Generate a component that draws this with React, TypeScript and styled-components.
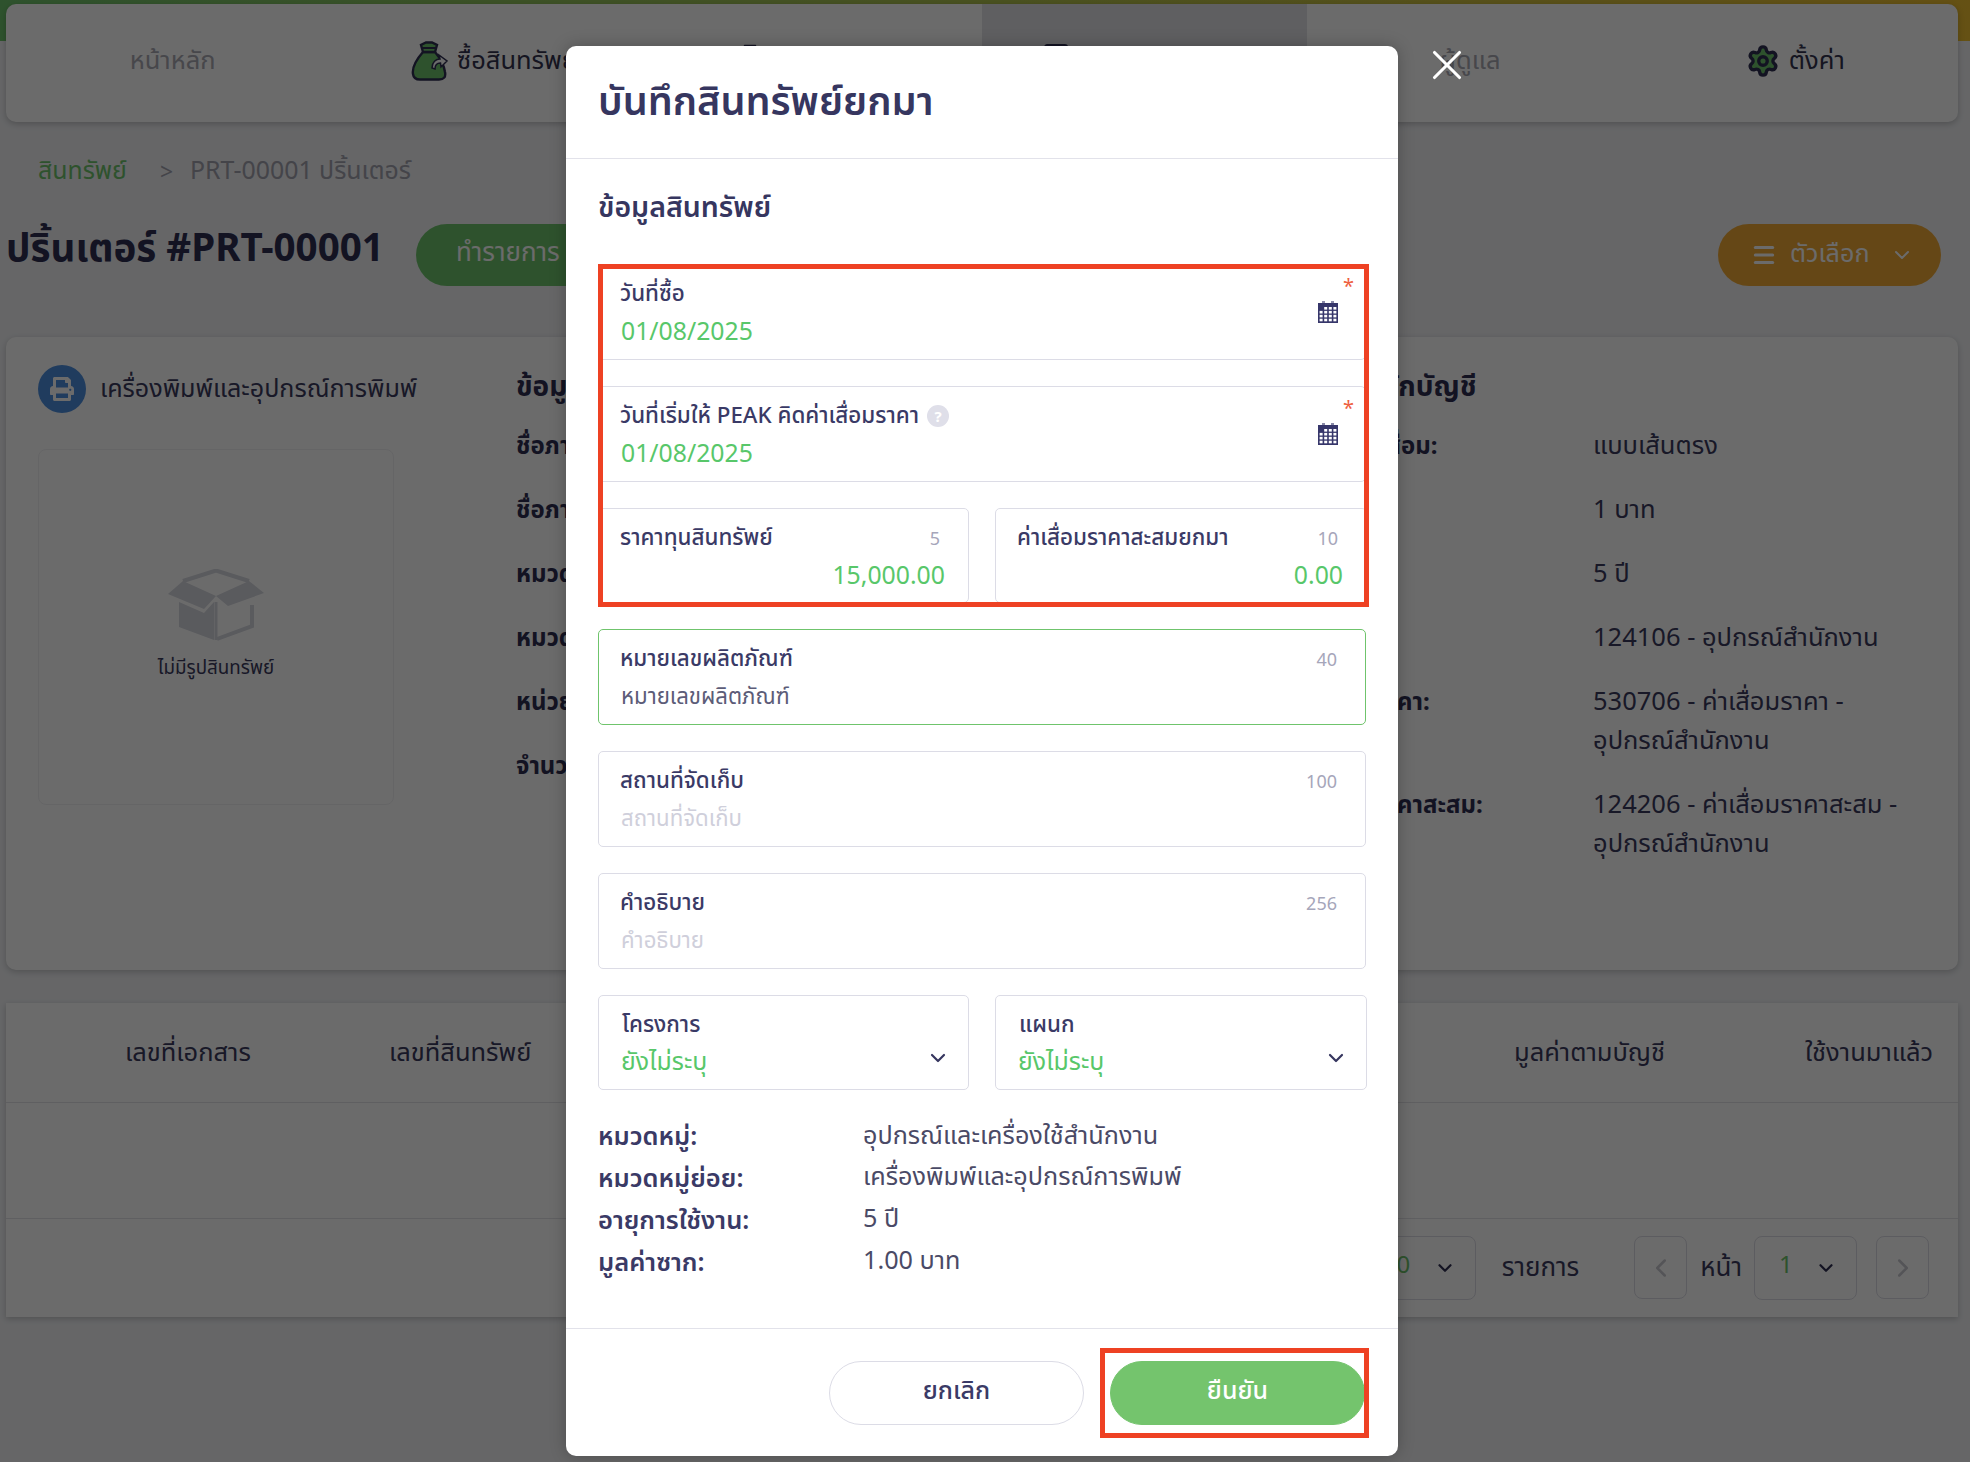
import React from "react";
import styled, { createGlobalStyle } from "styled-components";
import { ChevronDown, ChevronLeft, ChevronRight, Menu, Settings, X } from "lucide-react";
import { FaPrint } from "react-icons/fa";

const Global = createGlobalStyle`
  html, body { margin: 0; padding: 0; height: 100%; overflow: hidden; }
  body { font-family: "Noto Sans", "Noto Sans Thai", "Open Sans", "Liberation Sans", sans-serif; color: #3a3a66; }
  * { box-sizing: border-box; }
`;

const Page = styled.div`
  position: relative;
  width: 1970px;
  height: 1462px;
  overflow: hidden;
  padding: 4px 12px 0 6px;
  background: linear-gradient(90deg, #6fc46c, #f0c030) top / 100% 41px no-repeat, #f2f3f6;
`;

const Nav = styled.nav`
  display: grid;
  grid-template-columns: repeat(6, 1fr);
  height: 118px;
  background: #fff;
  border-radius: 10px;
  box-shadow: 0 2px 6px rgba(0, 0, 0, 0.22);
  overflow: hidden;
`;

const Tab = styled.div<{ $active?: boolean; $faint?: boolean }>`
  display: flex;
  justify-content: center;
  align-items: center;
  gap: 9px;
  padding-bottom: 5px;
  font-size: 25.500px;
  color: ${(p) => (p.$faint ? "#a9a9b4" : "#34344f")};
  background: ${(p) => (p.$active ? "#e2e3e8" : "transparent")};

  &:first-child {
    padding-left: 8px;
  }
`;

const Crumbs = styled.div`
  display: flex;
  align-items: center;
  height: 36px;
  margin-top: 31px;
  padding-left: 32px;
  font-size: 24.900px;
  color: #a2a2ae;
`;

const CrumbLink = styled.span`
  color: #6fc46c;
`;

const CrumbSep = styled.span`
  margin: 0 17px 0 33px;
  font-size: 23px;
`;

const TitleRow = styled.div`
  display: flex;
  align-items: center;
  height: 62px;
  margin-top: 35px;
  padding: 0 17px 0 0;
`;

const PageTitle = styled.h1`
  margin: 0 0 13px;
  font-size: 38.600px;
  font-weight: 700;
  color: #2e2e52;
`;

const GreenPill = styled.div`
  display: flex;
  align-items: center;
  width: 300px;
  height: 62px;
  margin-left: 32px;
  padding: 0 0 4px 40px;
  border-radius: 31px;
  background: #6fc46c;
  color: #fff;
  font-size: 26px;
`;

const AmberPill = styled.div`
  display: flex;
  align-items: center;
  gap: 13px;
  width: 223px;
  height: 62px;
  margin-left: auto;
  padding: 0 0 0 33px;
  border-radius: 31px;
  background: #f0a935;
  color: #fff;
  font-size: 25.200px;
`;

const PillLabel = styled.span`
  padding-bottom: 2px;
`;

const PillChevron = styled.span`
  display: flex;
  margin-left: 7px;
`;

const InfoCard = styled.section`
  display: grid;
  grid-template-columns: 478px 780px 1fr;
  height: 633px;
  margin-top: 51px;
  padding: 28px 0 0 32px;
  background: #fff;
  border-radius: 10px;
  box-shadow: 0 2px 6px rgba(0, 0, 0, 0.2);
`;

const CategoryRow = styled.div`
  display: flex;
  align-items: center;
  gap: 14px;
  font-size: 25.100px;
  color: #3a3a5e;
`;

const CategoryIcon = styled.span`
  display: flex;
  align-items: center;
  justify-content: center;
  width: 48px;
  height: 48px;
  border-radius: 50%;
  background: #4d8fe0;
  color: #fff;
`;

const ImageBox = styled.div`
  display: flex;
  flex-direction: column;
  align-items: center;
  justify-content: center;
  gap: 13px;
  width: 356px;
  height: 356px;
  margin-top: 36px;
  padding-bottom: 3px;
  border: 1px solid #f1f1f4;
  border-radius: 8px;
  font-size: 18.800px;
  color: #3a3a5e;
`;

const InfoCol = styled.div`
  display: flex;
  flex-direction: column;
  gap: 25px;
`;

const InfoHeading = styled.h3`
  margin: 0 0 -5px;
  font-size: 28px;
  line-height: 40px;
  font-weight: 700;
  color: #2e2e52;
`;

const InfoRow = styled.div`
  display: grid;
  grid-template-columns: 297px 330px;
  font-size: 25.500px;
  line-height: 39px;
  color: #3a3a5e;
`;

const InfoLabel = styled.span`
  font-size: 24px;
  font-weight: 700;
  color: #2e2e52;
`;

const TableCard = styled.section`
  height: 314px;
  margin-top: 33px;
  background: #fff;
  box-shadow: 0 2px 6px rgba(0, 0, 0, 0.2);
`;

const TableHead = styled.div`
  display: grid;
  grid-template-columns: 119px 264px 1125px 291px 1fr;
  align-items: center;
  height: 100px;
  border-bottom: 1px solid #e2e2e8;
  font-size: 25.500px;
  color: #3a3a5e;
`;

const TableBody = styled.div`
  height: 116px;
  border-bottom: 1px solid #e2e2e8;
`;

const Pager = styled.div`
  display: flex;
  align-items: center;
  justify-content: flex-end;
  height: 97px;
  padding-right: 29px;
  font-size: 26px;
  color: #3a3a5e;
`;

const PagerSelect = styled.div<{ $w: number; $mr: number; $pl: number }>`
  display: flex;
  align-items: center;
  justify-content: space-between;
  width: ${(p) => p.$w}px;
  height: 64px;
  margin-right: ${(p) => p.$mr}px;
  padding: 0 19px 0 ${(p) => p.$pl}px;
  border: 1px solid #dcdce4;
  border-radius: 8px;
`;

const PagerValue = styled.span`
  font-size: 24px;
  color: #6fc46c;
  padding-bottom: 8px;
`;

const PagerButton = styled.div<{ $mr?: number }>`
  display: flex;
  align-items: center;
  justify-content: center;
  width: 53px;
  height: 63px;
  margin-right: ${(p) => p.$mr ?? 0}px;
  border: 1px solid #dcdce4;
  border-radius: 8px;
  color: #c8c8d0;
`;

const PagerText = styled.span<{ $mr: number }>`
  margin-right: ${(p) => p.$mr}px;
`;

const Backdrop = styled.div`
  position: absolute;
  inset: 0;
  background: rgba(0, 0, 0, 0.58);
`;

const Modal = styled.div`
  position: absolute;
  left: 566px;
  top: 46px;
  width: 832px;
  height: 1410px;
  display: flex;
  flex-direction: column;
  background: #fff;
  border-radius: 10px;
  box-shadow: 0 0 16px rgba(0, 0, 0, 0.25);
`;

const CloseButton = styled.div`
  position: absolute;
  left: 1422px;
  top: 40px;
  display: flex;
  color: #fff;
`;

const ModalHeader = styled.header`
  display: flex;
  align-items: center;
  height: 113px;
  padding: 1px 32px 0;
  border-bottom: 1px solid #e2e2ea;
`;

const ModalTitle = styled.h2`
  margin: 0;
  font-size: 39.600px;
  font-weight: 600;
  color: #36365f;
`;

const ModalBody = styled.div`
  flex: 1;
  padding: 0 32px;
`;

const SectionTitle = styled.h3`
  display: flex;
  align-items: center;
  height: 105px;
  margin: 0;
  padding-bottom: 6px;
  font-size: 28.500px;
  font-weight: 600;
  color: #36365f;
`;

const Fields = styled.div`
  display: flex;
  flex-direction: column;
  gap: 26px;
`;

const Pair = styled.div`
  display: grid;
  grid-template-columns: 371px 372px;
  gap: 26px;
`;

const Field = styled.div<{ $focus?: boolean }>`
  position: relative;
  height: 95.750px;
  padding: 12px 22px 0 21px;
  border: 1px solid ${(p) => (p.$focus ? "#6fc46c" : "#dcdce6")};
  border-radius: 5px;
  background: #fff;
`;

const LabelLine = styled.div<{ $inset?: boolean }>`
  display: flex;
  align-items: center;
  justify-content: space-between;
  height: 34px;
  padding-left: ${(p) => (p.$inset ? 2 : 0)}px;
`;

const Label = styled.label`
  display: flex;
  align-items: center;
  gap: 8px;
  font-size: 22.400px;
  font-weight: 500;
  color: #3a3a66;
`;

const Counter = styled.span`
  padding-right: 6px;
  font-size: 18px;
  color: #a6a6ba;
`;

const Value = styled.div<{ $right?: boolean; $tone?: "green" | "dark" | "muted" | "choice" }>`
  height: 40px;
  margin-top: ${(p) => (p.$tone === "choice" ? -2 : p.$tone === "dark" || p.$tone === "muted" ? 0 : -1)}px;
  padding-left: 1px;
  padding-right: ${(p) => (p.$right ? 1 : 0)}px;
  line-height: 40px;
  font-size: ${(p) => (p.$tone === "dark" || p.$tone === "muted" ? 22.2 : 24.8)}px;
  text-align: ${(p) => (p.$right ? "right" : "left")};
  color: ${(p) =>
    p.$tone === "dark" ? "#5c5c78" : p.$tone === "muted" ? "#cfcfdb" : "#58c76a"};
`;

const Required = styled.span`
  position: absolute;
  top: 11px;
  right: 11px;
  font-size: 20px;
  line-height: 20px;
  color: #ee6040;
`;

const CalendarSlot = styled.span`
  position: absolute;
  top: 36px;
  right: 27px;
  display: flex;
`;

const HelpDot = styled.span`
  display: inline-flex;
  align-items: center;
  justify-content: center;
  width: 22px;
  height: 22px;
  border-radius: 50%;
  background: #dfdfe9;
  color: #fff;
  font-size: 15px;
  font-weight: 700;
`;

const SelectChevron = styled.span`
  position: absolute;
  top: 50px;
  right: 18px;
  display: flex;
  color: #36365f;
`;

const Summary = styled.dl`
  display: grid;
  grid-template-columns: 265px 1fr;
  grid-auto-rows: 41.800px;
  align-items: center;
  margin: 26px 0 0;
`;

const SummaryLabel = styled.dt`
  font-size: 25.500px;
  font-weight: 600;
  color: #3a3a66;
`;

const SummaryValue = styled.dd`
  margin: 0 0 3px;
  font-size: 25.200px;
  color: #4a4a66;
`;

const ModalFooter = styled.footer`
  display: flex;
  justify-content: flex-end;
  gap: 26px;
  height: 128px;
  padding: 32px 33px 0 0;
  border-top: 1px solid #e2e2ea;
`;

const Button = styled.div<{ $primary?: boolean }>`
  display: flex;
  align-items: center;
  justify-content: center;
  width: 255px;
  height: 64px;
  padding-bottom: 5px;
  border-radius: 32px;
  border: 1px solid ${(p) => (p.$primary ? "#74c46d" : "#dcdce6")};
  background: ${(p) => (p.$primary ? "#74c46d" : "#fff")};
  color: ${(p) => (p.$primary ? "#fff" : "#3a3a66")};
  font-size: 25px;
  font-weight: 500;
`;

const Highlight = styled.div<{ $x: number; $y: number; $w: number; $h: number }>`
  position: absolute;
  left: ${(p) => p.$x}px;
  top: ${(p) => p.$y}px;
  width: ${(p) => p.$w}px;
  height: ${(p) => p.$h}px;
  border: 5px solid #ee4123;
  pointer-events: none;
`;

const Calendar = () => (
  <svg width="20" height="22" viewBox="0 0 20 22">
    <rect x="4" y="0" width="3" height="2" fill="#8a8aa8" />
    <rect x="13" y="0" width="3" height="2" fill="#8a8aa8" />
    <rect x="0" y="2" width="20" height="20" fill="#36366a" />
    {[0, 1, 2, 3].map((r) =>
      [0, 1, 2, 3].map((c) =>
        r === 0 && c === 0 ? null : (
          <rect key={`${r}${c}`} x={1.6 + c * 4.6} y={6 + r * 3.9} width="3" height="2.6" fill="#fff" />
        )
      )
    )}
  </svg>
);

const BagIcon = () => (
  <svg width="37" height="40" viewBox="0 0 37 40">
    <path
      d="M12 11 C5 19 1 27 2 33 C2.500 37 5 38.500 9 38.500 H28 C33 38.500 35 36 34 31 C33 24 29 17 24 11 Z"
      fill="#6fc46c"
      stroke="#2e2e52"
      strokeWidth="2.400"
    />
    <path d="M12 11 L10 4 L15 1.500 H21 L26 4 L24 11 Z" fill="#6fc46c" stroke="#2e2e52" strokeWidth="2.400" />
    <path d="M11 7 H25" stroke="#2e2e52" strokeWidth="2" />
    <path d="M21 27 C21 21 25 18 29 18 L28 14 L36 20 L30 26 L29.500 22 C26 22 24 24 24 28 Z" fill="#fff" stroke="#2e2e52" strokeWidth="1.500" />
  </svg>
);

const PlainIcon = () => (
  <svg width="30" height="34" viewBox="0 0 30 34">
    <path d="M10 2 H20 L24 8 L20 13 H10 L6 8 Z" fill="#6fc46c" stroke="#2e2e52" strokeWidth="2.400" />
    <path d="M8 13 C3 20 2 32 6 32 H24 C28 32 27 20 22 13 Z" fill="#6fc46c" stroke="#2e2e52" strokeWidth="2.400" />
  </svg>
);

const CalcIcon = () => (
  <svg width="24" height="34" viewBox="0 0 24 34">
    <rect x="1.200" y="1.200" width="21.600" height="31" rx="2" fill="#6fc46c" stroke="#2e2e52" strokeWidth="2.400" />
    <rect x="6" y="6" width="3" height="3" fill="#2e2e52" />
    <rect x="11" y="6" width="3" height="3" fill="#2e2e52" />
    <rect x="16" y="6" width="3" height="3" fill="#2e2e52" />
  </svg>
);

const EmptyBox = () => (
  <svg width="96" height="72" viewBox="0 0 96 72">
    <path d="M15 12 L48 1.500 L81 12" fill="none" stroke="#d6d8e0" strokeWidth="4" />
    <path d="M15 12 L0 25 L36 40 L48 27 Z" fill="#d6d8e0" />
    <path d="M81 12 L96 24 L60 37 L48 27 Z" fill="#d6d8e0" />
    <path d="M11 33 L36 44 L46 33 V71 L11 58 Z" fill="#d6d8e0" />
    <path d="M49 70 L84 57 V36" fill="none" stroke="#d6d8e0" strokeWidth="4" />
    <path d="M48 33 V71" stroke="#d6d8e0" strokeWidth="3" />
  </svg>
);

export default function App() {
  return (
    <Page>
      <Global />
      <Nav>
        <Tab $faint>หน้าหลัก</Tab>
        <Tab>
          <BagIcon />
          ซื้อสินทรัพย์
        </Tab>
        <Tab>
          <PlainIcon />
          ขายสินทรัพย์
        </Tab>
        <Tab $active>
          <CalcIcon />
          ทะเบียนสินทรัพย์
        </Tab>
        <Tab $faint>ผู้ดูแล</Tab>
        <Tab>
          <Settings size={34} fill="#6fc46c" stroke="#2e2e52" strokeWidth={2.400} />
          ตั้งค่า
        </Tab>
      </Nav>

      <Crumbs>
        <CrumbLink>สินทรัพย์</CrumbLink>
        <CrumbSep>&gt;</CrumbSep>
        PRT-00001 ปริ้นเตอร์
      </Crumbs>

      <TitleRow>
        <PageTitle>ปริ้นเตอร์ #PRT-00001</PageTitle>
        <GreenPill>ทำรายการ</GreenPill>
        <AmberPill>
          <Menu size={26} strokeWidth={2.800} />
          <PillLabel>ตัวเลือก</PillLabel>
          <PillChevron>
            <ChevronDown size={24} strokeWidth={2} />
          </PillChevron>
        </AmberPill>
      </TitleRow>

      <InfoCard>
        <div>
          <CategoryRow>
            <CategoryIcon>
              <FaPrint size={24} />
            </CategoryIcon>
            เครื่องพิมพ์และอุปกรณ์การพิมพ์
          </CategoryRow>
          <ImageBox>
            <EmptyBox />
            ไม่มีรูปสินทรัพย์
          </ImageBox>
        </div>
        <InfoCol>
          <InfoHeading>ข้อมูลทั่วไป</InfoHeading>
          <InfoRow><InfoLabel>ชื่อภาษาไทย:</InfoLabel></InfoRow>
          <InfoRow><InfoLabel>ชื่อภาษาอังกฤษ:</InfoLabel></InfoRow>
          <InfoRow><InfoLabel>หมวดหมู่:</InfoLabel></InfoRow>
          <InfoRow><InfoLabel>หมวดหมู่ย่อย:</InfoLabel></InfoRow>
          <InfoRow><InfoLabel>หน่วยนับ:</InfoLabel></InfoRow>
          <InfoRow><InfoLabel>จำนวน:</InfoLabel></InfoRow>
        </InfoCol>
        <InfoCol>
          <InfoHeading>ข้อมูลหลักบัญชี</InfoHeading>
          <InfoRow><InfoLabel>วิธีคิดค่าเสื่อม:</InfoLabel><span>แบบเส้นตรง</span></InfoRow>
          <InfoRow><InfoLabel>ซาก:</InfoLabel><span>1 บาท</span></InfoRow>
          <InfoRow><InfoLabel>อายุ:</InfoLabel><span>5 ปี</span></InfoRow>
          <InfoRow><InfoLabel>บัญชี:</InfoLabel><span>124106 - อุปกรณ์สำนักงาน</span></InfoRow>
          <InfoRow><InfoLabel>ค่าเสื่อมราคา:</InfoLabel><span>530706 - ค่าเสื่อมราคา - อุปกรณ์สำนักงาน</span></InfoRow>
          <InfoRow><InfoLabel>ค่าเสื่อมราคาสะสม:</InfoLabel><span>124206 - ค่าเสื่อมราคาสะสม - อุปกรณ์สำนักงาน</span></InfoRow>
        </InfoCol>
      </InfoCard>

      <TableCard>
        <TableHead>
          <span />
          <span>เลขที่เอกสาร</span>
          <span>เลขที่สินทรัพย์</span>
          <span>มูลค่าตามบัญชี</span>
          <span>ใช้งานมาแล้ว</span>
        </TableHead>
        <TableBody />
        <Pager>
          <PagerSelect $w={130} $mr={26} $pl={36}>
            <PagerValue>10</PagerValue>
            <ChevronDown size={22} strokeWidth={2.400} color="#2e2e52" />
          </PagerSelect>
          <PagerText $mr={55}>รายการ</PagerText>
          <PagerButton $mr={13}><ChevronLeft size={30} /></PagerButton>
          <PagerText $mr={12}>หน้า</PagerText>
          <PagerSelect $w={103} $mr={19} $pl={24}>
            <PagerValue>1</PagerValue>
            <ChevronDown size={22} strokeWidth={2.400} color="#2e2e52" />
          </PagerSelect>
          <PagerButton><ChevronRight size={30} /></PagerButton>
        </Pager>
      </TableCard>

      <Backdrop />

      <Modal>
        <ModalHeader>
          <ModalTitle>บันทึกสินทรัพย์ยกมา</ModalTitle>
        </ModalHeader>
        <ModalBody>
          <SectionTitle>ข้อมูลสินทรัพย์</SectionTitle>
          <Fields>
            <Field>
              <LabelLine><Label>วันที่ซื้อ</Label></LabelLine>
              <Value>01/08/2025</Value>
              <Required>*</Required>
              <CalendarSlot><Calendar /></CalendarSlot>
            </Field>
            <Field>
              <LabelLine>
                <Label>วันที่เริ่มให้ PEAK คิดค่าเสื่อมราคา <HelpDot>?</HelpDot></Label>
              </LabelLine>
              <Value>01/08/2025</Value>
              <Required>*</Required>
              <CalendarSlot><Calendar /></CalendarSlot>
            </Field>
            <Pair>
              <Field>
                <LabelLine><Label>ราคาทุนสินทรัพย์</Label><Counter>5</Counter></LabelLine>
                <Value $right>15,000.00</Value>
              </Field>
              <Field>
                <LabelLine><Label>ค่าเสื่อมราคาสะสมยกมา</Label><Counter>10</Counter></LabelLine>
                <Value $right>0.00</Value>
              </Field>
            </Pair>
            <Field $focus>
              <LabelLine><Label>หมายเลขผลิตภัณฑ์</Label><Counter>40</Counter></LabelLine>
              <Value $tone="dark">หมายเลขผลิตภัณฑ์</Value>
            </Field>
            <Field>
              <LabelLine><Label>สถานที่จัดเก็บ</Label><Counter>100</Counter></LabelLine>
              <Value $tone="muted">สถานที่จัดเก็บ</Value>
            </Field>
            <Field>
              <LabelLine><Label>คำอธิบาย</Label><Counter>256</Counter></LabelLine>
              <Value $tone="muted">คำอธิบาย</Value>
            </Field>
            <Pair>
              <Field>
                <LabelLine $inset><Label>โครงการ</Label></LabelLine>
                <Value $tone="choice">ยังไม่ระบุ</Value>
                <SelectChevron><ChevronDown size={24} strokeWidth={2.200} /></SelectChevron>
              </Field>
              <Field>
                <LabelLine $inset><Label>แผนก</Label></LabelLine>
                <Value $tone="choice">ยังไม่ระบุ</Value>
                <SelectChevron><ChevronDown size={24} strokeWidth={2.200} /></SelectChevron>
              </Field>
            </Pair>
          </Fields>
          <Summary>
            <SummaryLabel>หมวดหมู่:</SummaryLabel>
            <SummaryValue>อุปกรณ์และเครื่องใช้สำนักงาน</SummaryValue>
            <SummaryLabel>หมวดหมู่ย่อย:</SummaryLabel>
            <SummaryValue>เครื่องพิมพ์และอุปกรณ์การพิมพ์</SummaryValue>
            <SummaryLabel>อายุการใช้งาน:</SummaryLabel>
            <SummaryValue>5 ปี</SummaryValue>
            <SummaryLabel>มูลค่าซาก:</SummaryLabel>
            <SummaryValue>1.00 บาท</SummaryValue>
          </Summary>
        </ModalBody>
        <ModalFooter>
          <Button>ยกเลิก</Button>
          <Button $primary>ยืนยัน</Button>
        </ModalFooter>
      </Modal>

      <CloseButton><X size={50} strokeWidth={1.500} /></CloseButton>

      <Highlight $x={598} $y={264} $w={771} $h={343} />
      <Highlight $x={1100} $y={1348} $w={269} $h={90} />
    </Page>
  );
}
